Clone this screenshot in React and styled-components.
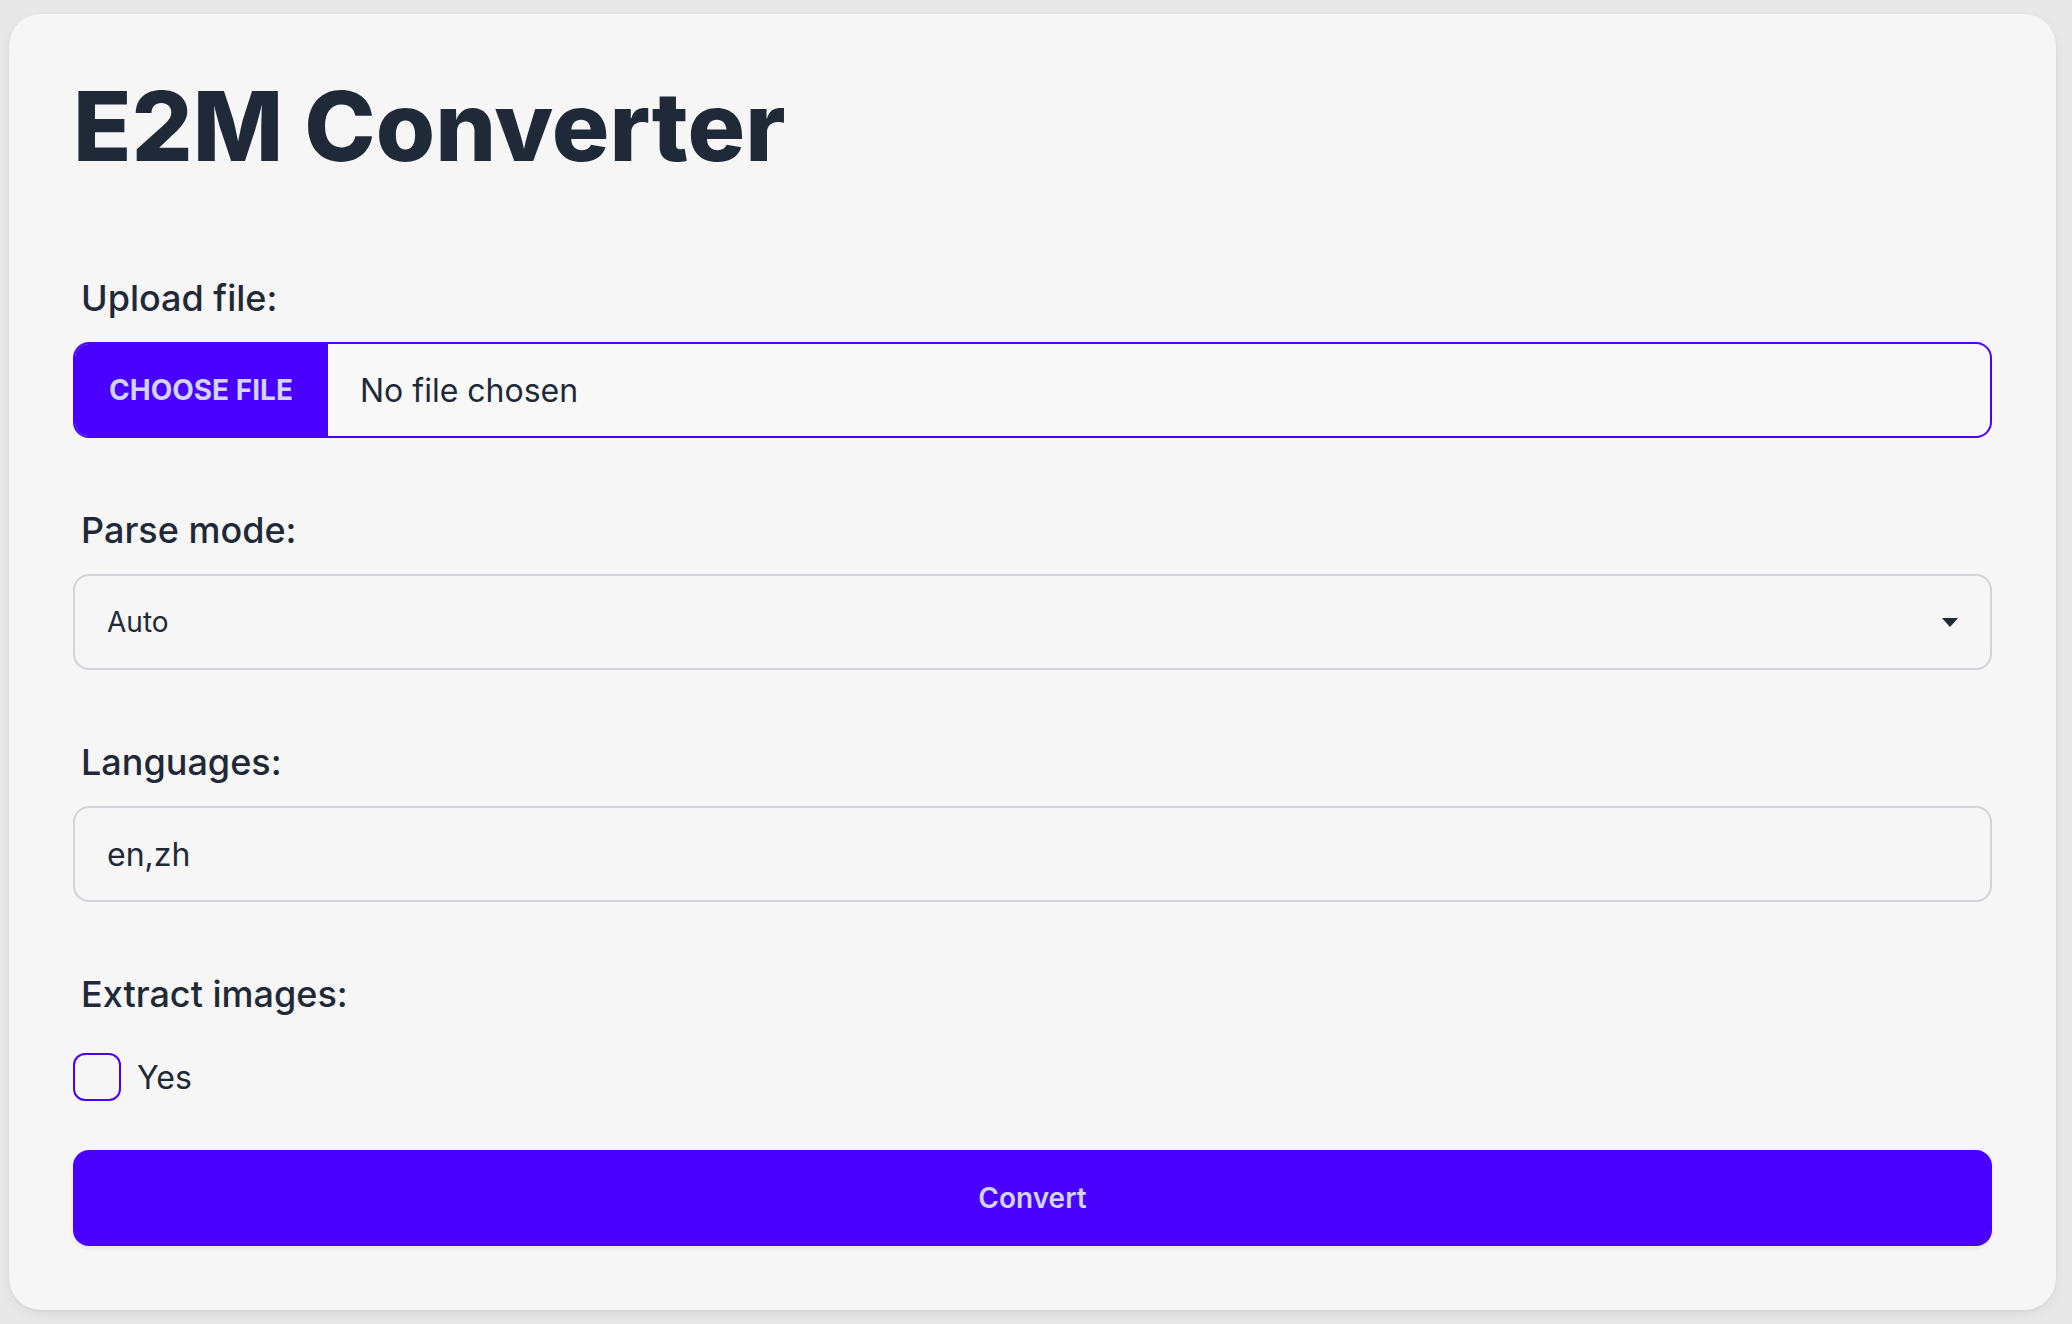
import React from "react";
import styled, { createGlobalStyle } from "styled-components";

const Global = createGlobalStyle`
  html, body { margin: 0; padding: 0; }
  body {
    background: #e8e8e8;
    font-family: Inter, "Noto Sans", "Liberation Sans", sans-serif;
    color: #1f2937;
    -webkit-font-smoothing: antialiased;
  }
  * { box-sizing: border-box; }
`;

const Page = styled.div`
  min-height: 100vh;
  padding: 14px 16px 14px 9px;
`;

const Card = styled.main`
  background: #f6f6f6;
  border-radius: 32px;
  padding: 64px;
  box-shadow: 0 4px 12px rgba(0, 0, 0, 0.06), 0 1px 3px rgba(0, 0, 0, 0.05);
`;

const Title = styled.h1`
  margin: 0;
  font-size: 96px;
  line-height: 1;
  font-weight: 800;
  color: #1f2937;
`;

const Form = styled.form`
  margin-top: 84px;
  display: flex;
  flex-direction: column;
`;

const Field = styled.div`
  display: flex;
  flex-direction: column;
  margin-bottom: ${(p) => p.$mb ?? 52}px;
`;

const Label = styled.label`
  display: block;
  padding: 16px 8px 20px;
  font-size: 36px;
  line-height: 48px;
  font-weight: 500;
  color: #1f2937;
`;

const FileBox = styled.label`
  display: flex;
  align-items: stretch;
  height: 96px;
  border: 2px solid #4a00ff;
  border-radius: 16px;
  overflow: hidden;
  background: #f8f8f8;
  cursor: pointer;
  input { display: none; }
`;

const FileButton = styled.span`
  flex: none;
  display: flex;
  align-items: center;
  padding: 0 0 0 36px;
  background: #4a00ff;
  color: #d0d4ff;
  font-size: 28px;
  font-weight: 700;
  text-transform: uppercase;
  white-space: nowrap;
  width: 255px;
  margin: -2px 0 -2px -2px;
`;

const FileName = styled.span`
  display: flex;
  align-items: center;
  padding-left: 32px;
  font-size: 32px;
  color: #1f2937;
  white-space: nowrap;
`;

const SelectWrap = styled.div`
  position: relative;
`;

const Select = styled.select`
  appearance: none;
  -webkit-appearance: none;
  width: 100%;
  height: 96px;
  border: 2px solid #d3d3d8;
  border-radius: 16px;
  background: #f6f6f6;
  padding: 0 80px 0 32px;
  font-family: inherit;
  font-size: 28px;
  color: #1f2937;
  outline: none;
`;

const Arrow = styled.svg`
  position: absolute;
  right: 34px;
  top: 44px;
  width: 16px;
  height: 9px;
  pointer-events: none;
`;

const TextInput = styled.input`
  width: 100%;
  height: 96px;
  border: 2px solid #d3d3d8;
  border-radius: 16px;
  background: #f6f6f6;
  padding: 0 32px;
  font-family: inherit;
  font-size: 32px;
  color: #1f2937;
  outline: none;
`;

const CheckRow = styled.label`
  display: flex;
  align-items: center;
  gap: 16px;
  padding: 15px 0;
  font-size: 32px;
  color: #1f2937;
  cursor: pointer;
`;

const Checkbox = styled.input`
  appearance: none;
  -webkit-appearance: none;
  margin: 0;
  width: 48px;
  height: 48px;
  border: 2px solid #4a00ff;
  border-radius: 12px;
  background: transparent;
  flex: none;
`;

const Submit = styled.button`
  margin-top: 34px;
  height: 96px;
  width: 100%;
  border: none;
  border-radius: 16px;
  background: #4a00ff;
  color: #d0d4ff;
  font-family: inherit;
  font-size: 28px;
  font-weight: 600;
  cursor: pointer;
  box-shadow: 0 2px 4px rgba(0, 0, 0, 0.08);
`;

export default function App() {
  return (
    <>
      <Global />
      <Page>
        <Card>
          <Title>E2M Converter</Title>
          <Form onSubmit={(e) => e.preventDefault()}>
            <Field>
              <Label>Upload file:</Label>
              <FileBox>
                <input type="file" />
                <FileButton>Choose File</FileButton>
                <FileName>No file chosen</FileName>
              </FileBox>
            </Field>
            <Field>
              <Label>Parse mode:</Label>
              <SelectWrap>
                <Select defaultValue="auto">
                  <option value="auto">Auto</option>
                  <option value="ocr">OCR</option>
                  <option value="txt">Text</option>
                </Select>
                <Arrow viewBox="0 0 16 9">
                  <path d="M0 0 H16 L8 9 Z" fill="#1f2937" />
                </Arrow>
              </SelectWrap>
            </Field>
            <Field>
              <Label>Languages:</Label>
              <TextInput defaultValue="en,zh" />
            </Field>
            <Field $mb={0}>
              <Label>Extract images:</Label>
              <CheckRow>
                <Checkbox type="checkbox" />
                Yes
              </CheckRow>
            </Field>
            <Submit type="submit">Convert</Submit>
          </Form>
        </Card>
      </Page>
    </>
  );
}
